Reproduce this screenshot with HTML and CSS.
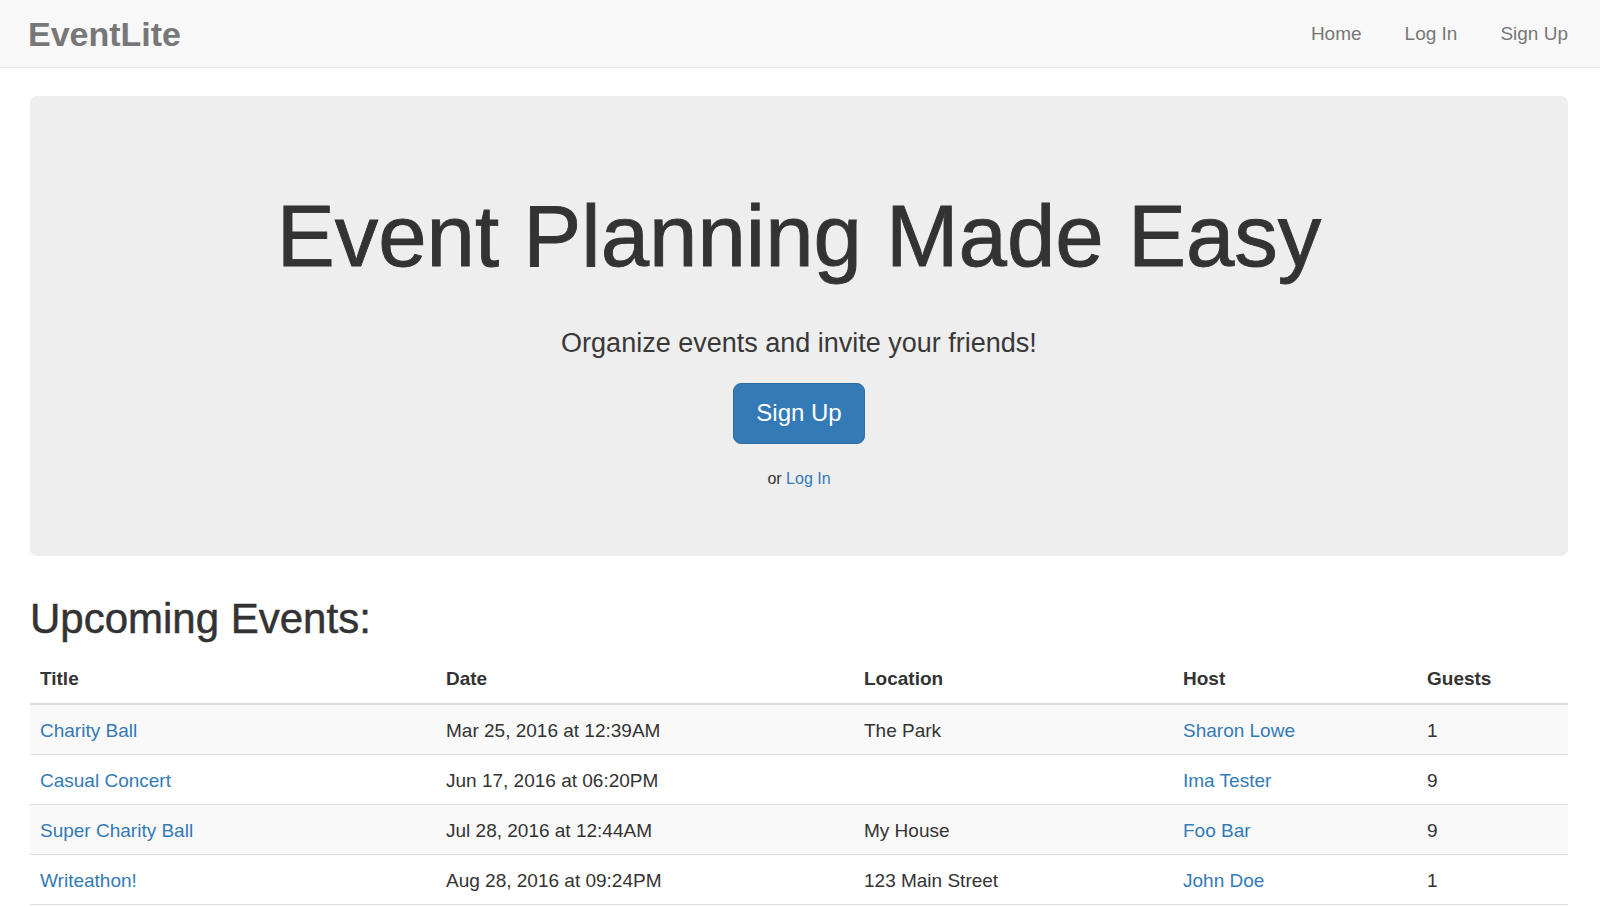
FILE: index.html
```html
<!DOCTYPE html>
<html lang="en">
<head>
<meta charset="utf-8">
<title>EventLite</title>
<link rel="stylesheet" href="styles.css">
</head>
<body>
<nav class="navbar">
  <div class="navbar-inner">
    <a class="brand" href="#">EventLite</a>
    <ul class="nav-links">
      <li><a href="#">Home</a></li>
      <li><a href="#">Log In</a></li>
      <li><a href="#">Sign Up</a></li>
    </ul>
  </div>
</nav>
<main class="container">
  <section class="jumbotron">
    <h1 class="hero-title">Event Planning Made Easy</h1>
    <p class="hero-lead">Organize events and invite your friends!</p>
    <a class="btn-primary" href="#">Sign Up</a>
    <p class="hero-alt">or <a href="#">Log In</a></p>
  </section>
  <h2 class="section-title">Upcoming Events:</h2>
  <table class="events">
    <colgroup>
      <col class="col-title">
      <col class="col-date">
      <col class="col-location">
      <col class="col-host">
      <col class="col-guests">
    </colgroup>
    <thead>
      <tr><th>Title</th><th>Date</th><th>Location</th><th>Host</th><th>Guests</th></tr>
    </thead>
    <tbody>
      <tr><td><a href="#">Charity Ball</a></td><td>Mar 25, 2016 at 12:39AM</td><td>The Park</td><td><a href="#">Sharon Lowe</a></td><td>1</td></tr>
      <tr><td><a href="#">Casual Concert</a></td><td>Jun 17, 2016 at 06:20PM</td><td></td><td><a href="#">Ima Tester</a></td><td>9</td></tr>
      <tr><td><a href="#">Super Charity Ball</a></td><td>Jul 28, 2016 at 12:44AM</td><td>My House</td><td><a href="#">Foo Bar</a></td><td>9</td></tr>
      <tr><td><a href="#">Writeathon!</a></td><td>Aug 28, 2016 at 09:24PM</td><td>123 Main Street</td><td><a href="#">John Doe</a></td><td>1</td></tr>
    </tbody>
  </table>
</main>
</body>
</html>
```

FILE: styles.css
```css
* { box-sizing: border-box; }

html, body {
  margin: 0;
  padding: 0;
  background: #fff;
}

body {
  font-family: "Liberation Sans", Helvetica, Arial, sans-serif;
  font-size: 19px;
  line-height: 27px;
  color: #333;
}

a {
  color: #337ab7;
  text-decoration: none;
}

/* Navbar */
.navbar {
  height: 68px;
  background: #f8f8f8;
  border-bottom: 1px solid #e7e7e7;
}

.navbar-inner {
  height: 100%;
  display: flex;
  align-items: center;
  justify-content: space-between;
  padding: 0 32px 0 28px;
}

.brand {
  font-size: 34px;
  font-weight: bold;
  color: #777;
  line-height: 40px;
}

.nav-links {
  list-style: none;
  margin: 0;
  padding: 0;
  display: flex;
  gap: 43px;
}

.nav-links a {
  color: #777;
  font-size: 19px;
}

/* Content */
.container {
  padding: 0 32px 0 30px;
}

.jumbotron {
  margin-top: 28px;
  background: #eee;
  border-radius: 7px;
  padding: 92px 20px 66px;
  display: flex;
  flex-direction: column;
  align-items: center;
  text-align: center;
}

.hero-title {
  margin: 0;
  font-size: 87px;
  line-height: 1.1;
  font-weight: normal;
  color: #333;
  -webkit-text-stroke: 0.9px #333;
}

.hero-lead {
  margin: 40px 0 0;
  font-size: 27px;
  line-height: 38px;
  color: #383838;
}

.btn-primary {
  margin-top: 21px;
  display: inline-block;
  background: #337ab7;
  border: 1px solid #2e6da4;
  border-radius: 8px;
  color: #fff;
  font-size: 24px;
  line-height: 32px;
  padding: 13.5px 22.5px;
}

.hero-alt {
  margin: 24px 0 0;
  font-size: 16px;
  line-height: 22px;
}

.section-title {
  margin: 40px 0 0;
  font-size: 42px;
  line-height: 1.1;
  font-weight: normal;
  color: #333;
  -webkit-text-stroke: 0.5px #333;
}

/* Table */
.events {
  margin-top: 12px;
  width: 100%;
  table-layout: fixed;
  border-collapse: collapse;
  border-spacing: 0;
  border-bottom: 1px solid #ddd;
}

.col-title { width: 406px; }
.col-date { width: 418px; }
.col-location { width: 319px; }
.col-host { width: 244px; }

.events th {
  text-align: left;
  font-weight: bold;
  padding: 11px 10px 11px;
  border-bottom: 2px solid #ddd;
}

.events td {
  padding: 12px 10px 10px;
  border-top: 1px solid #ddd;
  white-space: nowrap;
}

.events tbody tr:nth-child(odd) {
  background: #f9f9f9;
}
```
